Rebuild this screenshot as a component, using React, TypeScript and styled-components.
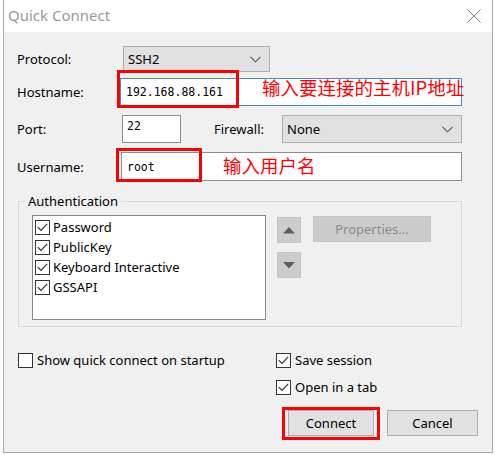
import { FunctionComponent, ReactNode } from 'react'
import { createGlobalStyle, styled } from 'styled-components'

const UI_FONT = `'Noto Sans', 'Open Sans', sans-serif`
const EDIT_FONT = `'DejaVu Sans Mono', 'Liberation Mono', monospace`
const CJK_FONT = `'Noto Sans CJK SC', 'Noto Sans', sans-serif`
const COLOR_FACE = '#f0f0f0'
const COLOR_BUTTON = '#e1e1e1'
const COLOR_BUTTON_BORDER = '#adadad'
const COLOR_MARK = '#ff0000'

const GlobalStyle = createGlobalStyle`
  html, body {
    margin: 0;
    padding: 0;
    background: #ffffff;
  }
  body {
    font-family: ${UI_FONT};
    font-size: 13px;
    color: #000;
  }
`

const Window = styled.div`
  position: relative;
  box-sizing: border-box;
  width: 490px;
  height: 453px;
  margin-left: 3px;
  border: 1px solid #a9a9a9;
  border-top: none;
  background: ${COLOR_FACE};
  display: flex;
  flex-direction: column;
`

const TitleBar = styled.div`
  height: 32px;
  flex: none;
  background: #ffffff;
  display: flex;
  align-items: center;
  justify-content: space-between;
  padding-left: 4px;
`

const TitleText = styled.span`
  font-family: ${UI_FONT};
  font-size: 15px;
  color: #999999;
  margin-top: -2px;
`

const CloseButton = styled.div`
  width: 16px;
  height: 16px;
  margin-right: 10px;
  display: flex;
  align-items: center;
  justify-content: center;
`

const Body = styled.div`
  flex: 1;
  padding: 14px 0 0 13px;
  display: flex;
  flex-direction: column;
`

const FieldRow = styled.div<{ $mt: number; $h: number }>`
  display: flex;
  align-items: center;
  height: ${(p) => p.$h}px;
  margin-top: ${(p) => p.$mt}px;
`

const Label = styled.span<{ $w: number; $ml?: number }>`
  width: ${(p) => p.$w}px;
  margin-left: ${(p) => p.$ml ?? 0}px;
  flex: none;
  white-space: nowrap;
`

const Combo = styled.div<{ $w: number; $ml?: number }>`
  box-sizing: border-box;
  width: ${(p) => p.$w}px;
  height: 100%;
  margin-left: ${(p) => p.$ml ?? 0}px;
  background: ${COLOR_BUTTON};
  border: 1px solid ${COLOR_BUTTON_BORDER};
  display: flex;
  align-items: center;
  justify-content: space-between;
  padding: 0 8px 0 4px;
`

const Edit = styled.div<{ $w: number; $focused?: boolean; $top?: boolean }>`
  box-sizing: border-box;
  width: ${(p) => p.$w}px;
  height: 100%;
  background: #ffffff;
  border: 1px solid ${(p) => (p.$focused ? '#3c8fd6' : '#8c8c8c')};
  font-family: ${EDIT_FONT};
  font-size: 11.5px;
  display: flex;
  align-items: ${(p) => (p.$top ? 'flex-start' : 'center')};
  padding: ${(p) => (p.$top ? '3px 0 0 4px' : '0 0 0 5px')};
`

const GroupBox = styled.fieldset`
  box-sizing: border-box;
  width: 444px;
  margin: 12px 0 0 1px;
  padding: 6px 12px 6px 13px;
  border: 1px solid #d8d8d8;
  min-width: 0;
`

const Legend = styled.legend`
  padding: 0 3px;
  margin-left: -7px;
  line-height: 16px;
`

const GroupContent = styled.div`
  display: flex;
  align-items: flex-start;
`

const ListBox = styled.div`
  box-sizing: border-box;
  width: 234px;
  height: 105px;
  background: #ffffff;
  border: 1px solid #828790;
  padding: 1px 0 0 2px;
  display: flex;
  flex-direction: column;
`

const ListItem = styled.div`
  height: 20px;
  display: flex;
  align-items: center;
  gap: 3px;
  white-space: nowrap;
`

const ArrowColumn = styled.div`
  display: flex;
  flex-direction: column;
  gap: 9px;
  margin: 2px 0 0 11px;
`

const FlatButton = styled.div<{ $w: number; $ml?: number; $mt?: number; $disabled?: boolean }>`
  box-sizing: border-box;
  width: ${(p) => p.$w}px;
  height: 26px;
  margin-left: ${(p) => p.$ml ?? 0}px;
  margin-top: ${(p) => p.$mt ?? 0}px;
  background: #cccccc;
  border: 1px solid #c4c4c4;
  color: ${(p) => (p.$disabled ? '#8a8a8a' : '#000')};
  display: flex;
  align-items: center;
  justify-content: center;
`

const OptionsGrid = styled.div`
  display: grid;
  grid-template-columns: 258px auto;
  grid-auto-rows: 16px;
  row-gap: 11px;
  margin: 25px 0 0 1px;
`

const Option = styled.div<{ $col: number }>`
  grid-column: ${(p) => p.$col};
  display: flex;
  align-items: center;
  gap: 4px;
  white-space: nowrap;
`

const ButtonRow = styled.div`
  display: flex;
  justify-content: flex-end;
  gap: 13px;
  margin: 15px 14px 0 0;
`

const PushButton = styled.div<{ $w: number }>`
  box-sizing: border-box;
  width: ${(p) => p.$w}px;
  height: 26px;
  background: ${COLOR_BUTTON};
  border: 1px solid ${COLOR_BUTTON_BORDER};
  display: flex;
  align-items: center;
  justify-content: center;
`

const CheckBoxFrame = styled.span`
  box-sizing: border-box;
  width: 15px;
  height: 15px;
  flex: none;
  border: 1px solid #333333;
  background: #ffffff;
  display: flex;
  align-items: center;
  justify-content: center;
`

// annotation overlays drawn on top of the dialog
const MarkBox = styled.div<{ $x: number; $y: number; $w: number; $h: number }>`
  position: absolute;
  left: ${(p) => p.$x}px;
  top: ${(p) => p.$y}px;
  width: ${(p) => p.$w}px;
  height: ${(p) => p.$h}px;
  box-sizing: border-box;
  border: 3px solid ${COLOR_MARK};
  pointer-events: none;
`

const MarkText = styled.div<{ $x: number; $y: number }>`
  position: absolute;
  left: ${(p) => p.$x}px;
  top: ${(p) => p.$y}px;
  font-family: ${CJK_FONT};
  font-size: 18.5px;
  line-height: 22px;
  color: ${COLOR_MARK};
  white-space: nowrap;
`

const Chevron = () => (
  <svg width="11" height="7" viewBox="0 0 11 7">
    <path d="M0.5 0.8 L5.5 5.8 L10.5 0.8" fill="none" stroke="#555" strokeWidth="1.1" />
  </svg>
)

const CheckBox: FunctionComponent<{ checked?: boolean }> = ({ checked }) => (
  <CheckBoxFrame>
    {checked && (
      <svg width="11" height="9" viewBox="0 0 11 9">
        <path d="M0.8 4.2 L4 7.4 L10.2 0.8" fill="none" stroke="#333" strokeWidth="1.2" />
      </svg>
    )}
  </CheckBoxFrame>
)

const Triangle: FunctionComponent<{ down?: boolean }> = ({ down }) => (
  <svg width="12" height="7" viewBox="0 0 12 7">
    <path d={down ? 'M0 0 H12 L6 6.5 Z' : 'M0 6.5 H12 L6 0 Z'} fill="#5e5e5e" />
  </svg>
)

const CheckOption: FunctionComponent<{ col: number; checked?: boolean; children: ReactNode }> = ({
  col,
  checked,
  children,
}) => (
  <Option $col={col}>
    <CheckBox checked={checked} />
    {children}
  </Option>
)

const authMethods = ['Password', 'PublicKey', 'Keyboard Interactive', 'GSSAPI']

export default function App() {
  return (
    <>
      <GlobalStyle />
      <Window>
        <TitleBar>
          <TitleText>Quick Connect</TitleText>
          <CloseButton>
            <svg width="14" height="14" viewBox="0 0 14 14">
              <path d="M0.5 0.5 L13.5 13.5 M13.5 0.5 L0.5 13.5" stroke="#7a7a7a" strokeWidth="1" />
            </svg>
          </CloseButton>
        </TitleBar>
        <Body>
          <FieldRow $mt={0} $h={26}>
            <Label $w={106}>Protocol:</Label>
            <Combo $w={147}>
              <span>SSH2</span>
              <Chevron />
            </Combo>
          </FieldRow>
          <FieldRow $mt={6} $h={28}>
            <Label $w={103}>Hostname:</Label>
            <Edit $w={342} $focused>
              192.168.88.161
            </Edit>
          </FieldRow>
          <FieldRow $mt={9} $h={28}>
            <Label $w={105}>Port:</Label>
            <Edit $w={59} $top>
              22
            </Edit>
            <Label $w={68} $ml={33}>
              Firewall:
            </Label>
            <Combo $w={180}>
              <span>None</span>
              <Chevron />
            </Combo>
          </FieldRow>
          <FieldRow $mt={9} $h={29}>
            <Label $w={104}>Username:</Label>
            <Edit $w={341}>root</Edit>
          </FieldRow>

          <GroupBox>
            <Legend>Authentication</Legend>
            <GroupContent>
              <ListBox>
                {authMethods.map((m) => (
                  <ListItem key={m}>
                    <CheckBox checked />
                    {m}
                  </ListItem>
                ))}
              </ListBox>
              <ArrowColumn>
                <FlatButton $w={24}>
                  <Triangle />
                </FlatButton>
                <FlatButton $w={24}>
                  <Triangle down />
                </FlatButton>
              </ArrowColumn>
              <FlatButton $w={118} $ml={12} $mt={1} $disabled>
                Properties...
              </FlatButton>
            </GroupContent>
          </GroupBox>

          <OptionsGrid>
            <CheckOption col={1}>Show quick connect on startup</CheckOption>
            <CheckOption col={2} checked>
              Save session
            </CheckOption>
            <CheckOption col={2} checked>
              Open in a tab
            </CheckOption>
          </OptionsGrid>

          <ButtonRow>
            <PushButton $w={86}>Connect</PushButton>
            <PushButton $w={91}>Cancel</PushButton>
          </ButtonRow>
        </Body>

        <MarkBox $x={113} $y={70} $w={122} $h={38} />
        <MarkText $x={258} $y={76}>输入要连接的主机IP地址</MarkText>
        <MarkBox $x={112} $y={148} $w={86} $h={34} />
        <MarkText $x={219} $y={154}>输入用户名</MarkText>
        <MarkBox $x={278} $y={407} $w={98} $h={33} />
      </Window>
    </>
  )
}
